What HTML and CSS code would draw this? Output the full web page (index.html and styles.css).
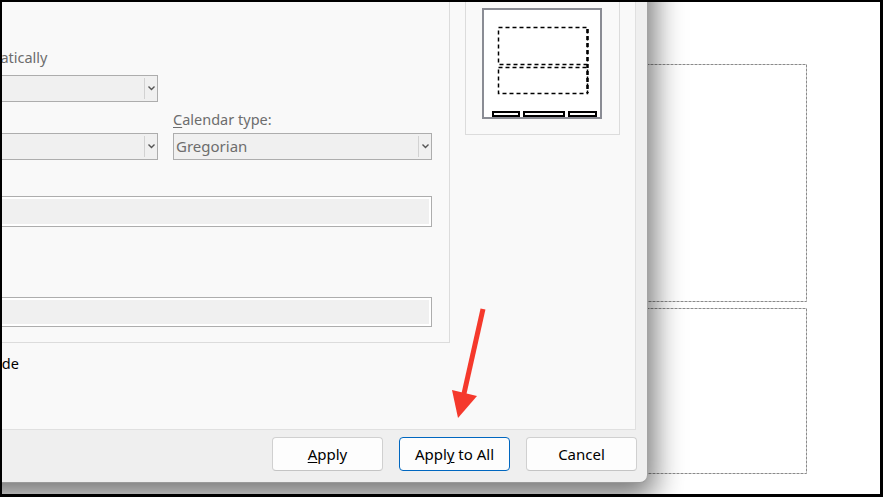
FILE: index.html
```html
<!DOCTYPE html>
<html lang="en">
<head>
    <meta charset="UTF-8">
    <title>Header and Footer</title>
    <link rel="stylesheet" href="styles.css">
</head>
<body>
    <div class="screen">
        <!-- slide placeholders behind the dialog -->
        <svg class="slide slide-top" width="245" height="238">
            <rect x="0.5" y="0.5" width="244" height="237" fill="none" stroke="#8a8a8a" stroke-dasharray="3 1"/>
        </svg>
        <svg class="slide slide-bottom" width="245" height="166">
            <rect x="0.5" y="0.5" width="244" height="165" fill="none" stroke="#8a8a8a" stroke-dasharray="3 1"/>
        </svg>

        <div class="dialog">
            <div class="panel">
                <div class="top-row">
                    <div class="group">
                        <div class="check-row"><span class="box"></span><span>Date and time</span></div>
                        <div class="sub">
                            <div class="radio-row"><span class="radio"></span><span class="dim">Update automatically</span></div>
                            <div class="select wide"><span class="value"></span><span class="drop"><svg width="7" height="5"><polyline points="0.5,0.5 3.5,3.5 6.5,0.5" fill="none" stroke="#555" stroke-width="1.4"/></svg></span></div>
                            <div class="pair labels">
                                <span class="dim"><u>L</u>anguage:</span>
                                <span class="dim"><u>C</u>alendar type:</span>
                            </div>
                            <div class="pair">
                                <div class="select"><span class="value"></span><span class="drop"><svg width="7" height="5"><polyline points="0.5,0.5 3.5,3.5 6.5,0.5" fill="none" stroke="#555" stroke-width="1.4"/></svg></span></div>
                                <div class="select"><span class="value">Gregorian</span><span class="drop"><svg width="7" height="5"><polyline points="0.5,0.5 3.5,3.5 6.5,0.5" fill="none" stroke="#555" stroke-width="1.4"/></svg></span></div>
                            </div>
                            <div class="radio-row fixed"><span class="radio"></span><span>Fi<u>x</u>ed</span></div>
                            <div class="textbox tall"></div>
                        </div>
                        <div class="check-row first"><span class="box"></span><span>Slide <u>n</u>umber</span></div>
                        <div class="check-row"><span class="box"></span><span><u>F</u>ooter</span></div>
                        <div class="sub last">
                            <div class="textbox"></div>
                        </div>
                    </div>
                    <div class="preview">
                        <div class="thumb">
                            <svg width="116" height="107">
                                <rect x="14.5" y="17.5" width="89" height="37" fill="none" stroke="#000" stroke-width="1.5" stroke-dasharray="4 3"/>
                                <rect x="14.5" y="57.5" width="89" height="26" fill="none" stroke="#000" stroke-width="1.5" stroke-dasharray="4 3"/>
                                <line x1="103.5" y1="19" x2="103.5" y2="83" stroke="#000" stroke-width="2.5" stroke-dasharray="4 3"/>
                                <rect x="9" y="102" width="26" height="4" fill="#fff" stroke="#000" stroke-width="2"/>
                                <rect x="40" y="102" width="40" height="4" fill="#fff" stroke="#000" stroke-width="2"/>
                                <rect x="85" y="102" width="27" height="4" fill="#fff" stroke="#000" stroke-width="2"/>
                            </svg>
                        </div>
                    </div>
                </div>
                <div class="check-row title-row"><span class="box"></span><span><u>D</u>on't show on title slide</span></div>
            </div>
            <div class="footer">
                <button class="btn"><u>A</u>pply</button>
                <button class="btn primary">Appl<u>y</u> to All</button>
                <button class="btn">Cancel</button>
            </div>
        </div>

        <!-- red annotation arrow -->
        <svg class="annotation" width="878" height="492">
            <line x1="481" y1="307" x2="461" y2="396" stroke="#f5392c" stroke-width="5"/>
            <polygon points="450,388 475,394 456,416" fill="#f5392c"/>
        </svg>
    </div>
</body>
</html>
```

FILE: styles.css
```css
* { box-sizing: border-box; }
body { margin: 0; padding: 2px 3px 3px 2px; background: #000; font-family: "Noto Sans", sans-serif; font-size: 14.5px; color: #000; }
u { text-decoration-thickness: 1px; text-underline-offset: 2px; }

.screen { position: relative; width: 878px; height: 492px; background: #fff; overflow: hidden; }
.slide { position: absolute; left: 560px; }
.slide-top { top: 62px; }
.slide-bottom { top: 306px; }

/* dialog window, mostly cut off on the left */
.dialog { position: absolute; left: -300px; top: -60px; width: 946px; height: 541px; display: flex; flex-direction: column; background: #efefef; border-right: 1px solid #a3a3a3; border-bottom: 1px solid #9a9a9a; border-bottom-right-radius: 8px; box-shadow: 6px 14px 30px rgba(0,0,0,0.55); }
.panel { width: 934px; height: 488px; padding: 40px 0 0 50px; background: #f9f9f9; border-right: 1px solid #e0e0e0; border-bottom: 1px solid #e0e0e0; }
.top-row { display: flex; align-items: flex-start; }

.group { width: 698px; border: 1px solid #dcdcdc; padding: 20px 17px 15px 12px; }
.sub { margin-left: 137px; }
.sub.last { margin-top: 12px; }

.check-row, .radio-row { display: flex; align-items: center; gap: 6px; height: 20px; line-height: 20px; white-space: nowrap; }
.check-row.first { margin-top: 10px; }
.check-row + .check-row { margin-top: 8px; }
.radio-row { margin-left: -19px; margin-top: 24px; }
.radio-row.fixed { margin-top: 8px; }
.box { width: 13px; height: 13px; border: 1px solid #333; background: #fff; }
.radio { width: 13px; height: 13px; border: 1px solid #888; border-radius: 50%; background: #fff; }
.dim { color: #6d6d6d; }

.select { display: flex; height: 27px; border: 1px solid #adadad; background: #f0f0f0; }
.select.wide { width: 256px; margin-top: 8px; }
.select .value { flex: 1; padding-left: 2px; line-height: 24px; color: #6d6d6d; font-size: 15px; }
.select .drop { width: 13px; margin: 2px 0; border-left: 1px solid #d2d2d2; display: flex; align-items: center; justify-content: center; }

.pair { display: grid; grid-template-columns: 256px 259px; column-gap: 15px; margin-top: 4px; }
.pair.labels { margin-top: 7px; height: 20px; line-height: 20px; }

.textbox { width: 530px; height: 30px; border: 1px solid #adadad; background: #f0f0f0; box-shadow: inset 0 0 0 2px #fff; }
.textbox.tall { height: 31px; margin-top: 8px; }

.preview { width: 155px; height: 153px; margin-left: 15px; padding: 25px 0 0 16px; border: 1px solid #dcdcdc; }
.thumb { width: 120px; height: 111px; border: 2px solid #8a8c94; background: #fff; }
.thumb svg { display: block; }

.title-row { margin-top: 10px; margin-left: 85px; }

.footer { flex: 1; display: flex; justify-content: flex-end; gap: 16px; padding: 7px 10px 0 0; }
.btn { width: 111px; height: 34px; font-family: inherit; font-size: 15px; color: #000; background: #fdfdfd; border: 1px solid #d0d0d0; border-bottom-color: #c4c4c4; border-radius: 4px; }
.btn.primary { border-color: #0067c0; }

.annotation { position: absolute; left: 0; top: 0; pointer-events: none; }
```
